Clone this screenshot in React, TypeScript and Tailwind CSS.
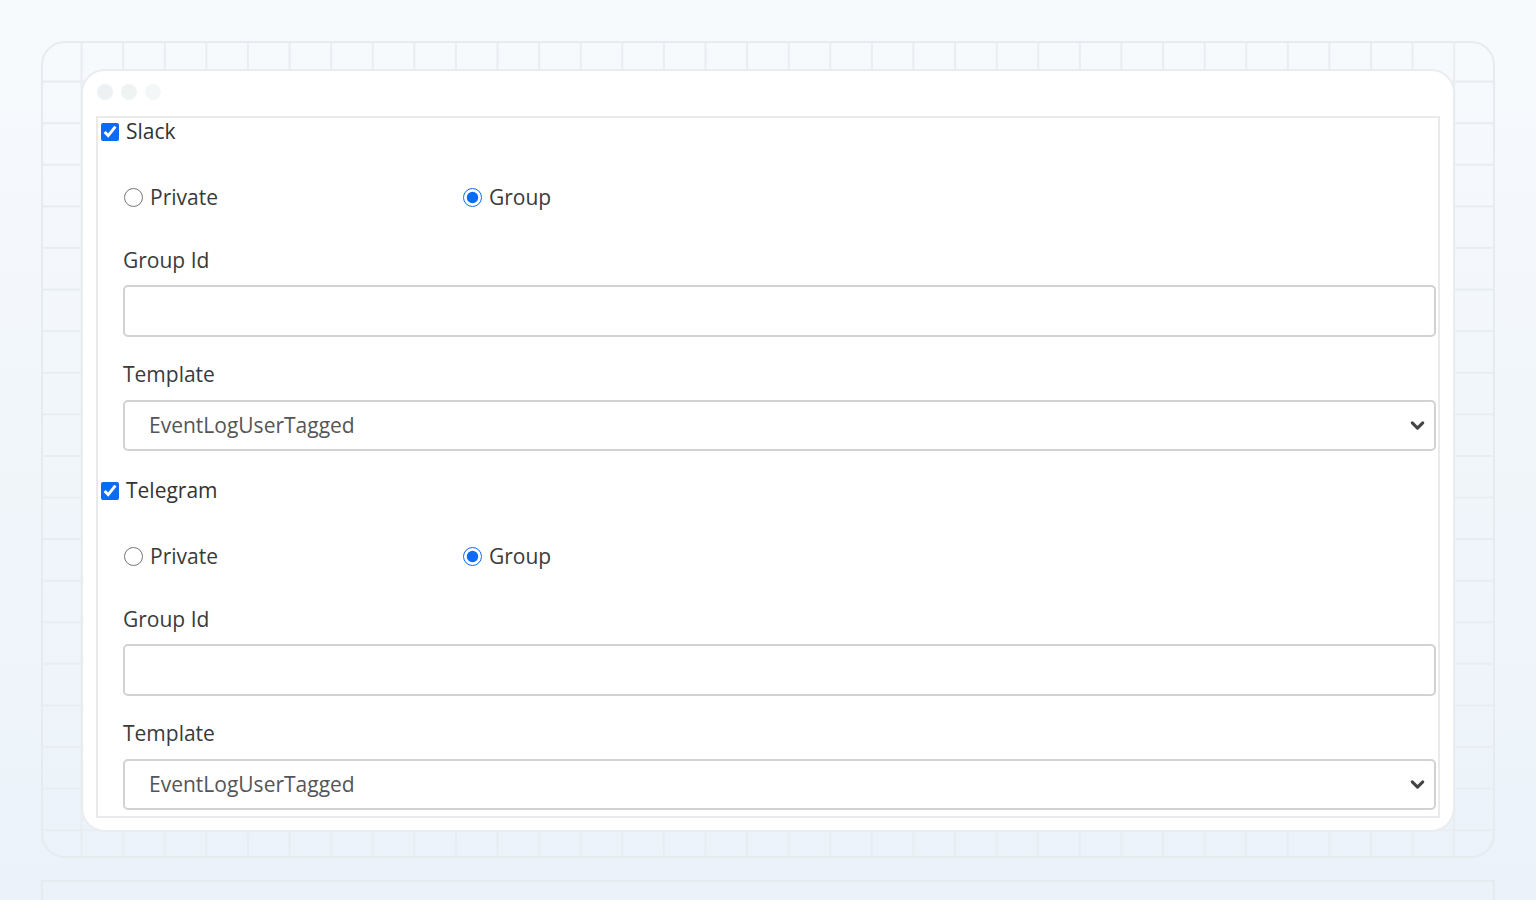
import { ChevronDown } from 'lucide-react';

const font = { fontFamily: '"Open Sans", "Noto Sans", sans-serif' };

function Radio({ label, checked }: { label: string; checked?: boolean }) {
  return (
    <label className="flex items-center gap-[7px] text-[21px] leading-none text-[#3a3a3a]">
      <input type="radio" defaultChecked={checked} className="m-0 w-[19px] h-[19px] accent-[#0a6cf5]" />
      {label}
    </label>
  );
}

function ChannelSection({ name, first }: { name: string; first?: boolean }) {
  return (
    <div className={first ? '' : 'mt-[26px]'}>
      {/* Channel toggle */}
      <label className="h-[28px] pl-[3px] flex items-center gap-[7px] text-[21px] text-[#333]">
        <input type="checkbox" defaultChecked className="m-0 w-[18px] h-[18px] accent-[#0a6cf5]" />
        {name}
      </label>

      {/* Private / Group */}
      <div className="mt-[37px] h-[28px] pl-[26px] flex items-center">
        <div className="w-[339px]">
          <Radio label="Private" />
        </div>
        <Radio label="Group" checked />
      </div>

      <div className="pl-[25px] pr-[2px]">
        <div className="mt-[36px] h-[28px] flex items-center text-[21px] text-[#3a3a3a]">Group Id</div>
        <input
          type="text"
          className="mt-[10px] block w-full h-[52px] rounded-[5px] border-2 border-[#d2d2d2] bg-white px-6 outline-none"
        />

        <div className="mt-[24px] h-[28px] flex items-center text-[21px] text-[#3a3a3a]">Template</div>
        <div className="mt-[11px] h-[51px] rounded-[5px] border-2 border-[#d2d2d2] bg-white pl-[24px] pr-[6px] flex items-center justify-between">
          <span className="text-[21px] text-[#555]">EventLogUserTagged</span>
          <ChevronDown size={21} strokeWidth={3.5} className="text-[#444]" />
        </div>
      </div>
    </div>
  );
}

export default function App() {
  return (
    <div
      className="h-[900px] overflow-hidden bg-[linear-gradient(to_bottom,#f7fafd,#ebf2f9)] pt-[41px] px-[41px]"
      style={font}
    >
      {/* Grid backdrop */}
      <div className="h-[817px] rounded-[24px] border-2 border-[#e6ebf0] bg-[linear-gradient(to_right,#e8edf2_2px,transparent_2px),linear-gradient(to_bottom,#e8edf2_2px,transparent_2px)] bg-[size:41.6px_41.6px] bg-[position:-4px_-4px] pt-[26px] pl-[38px] pr-[38px]">
        {/* Window card */}
        <div className="h-[763px] rounded-[24px] border-2 border-[#eaedf0] bg-white px-[13px] pt-[13px] flex flex-col">
          <div className="flex gap-[8px] pl-[1px]">
            <span className="w-[16px] h-[16px] rounded-full bg-[#edf1f4]" />
            <span className="w-[16px] h-[16px] rounded-full bg-[#eff3f4]" />
            <span className="w-[16px] h-[16px] rounded-full bg-[#f4f7f8]" />
          </div>

          {/* Embedded form frame */}
          <div className="mt-[16px] h-[702px] border-2 border-[#e9eaec] overflow-hidden">
            <ChannelSection name="Slack" first />
            <ChannelSection name="Telegram" />
          </div>
        </div>
      </div>

      {/* Next backdrop edge */}
      <div className="mt-[22px] h-[40px] border-x-2 border-t-2 border-[#e6ebf0]" />
    </div>
  );
}
